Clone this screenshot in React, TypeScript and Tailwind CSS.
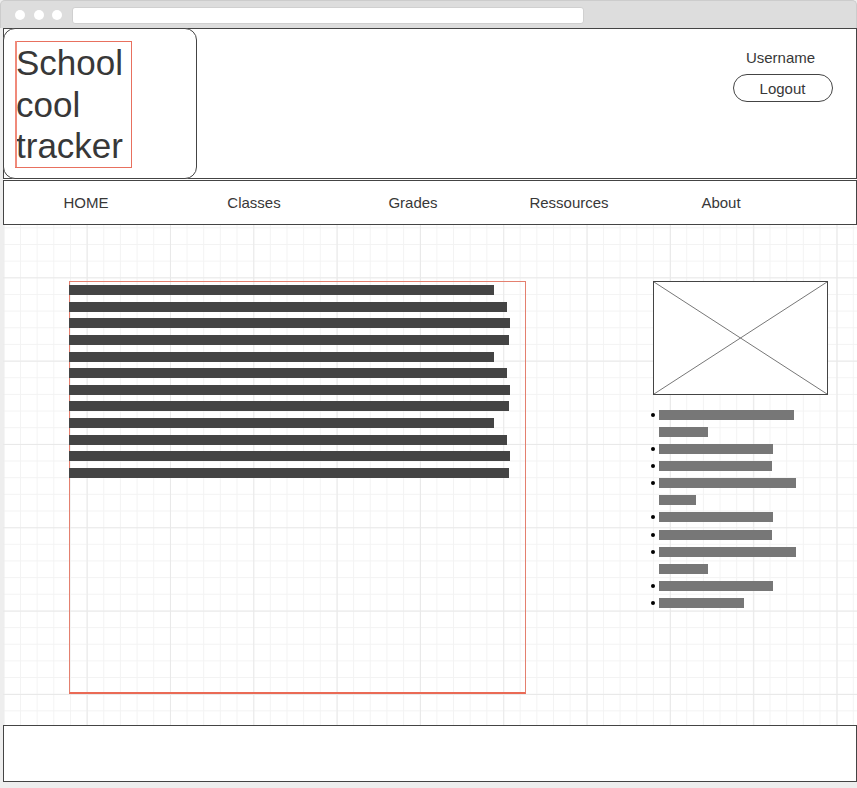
import React from "react";

const navItems = [
  { label: "HOME", w: "w-[164px]" },
  { label: "Classes", w: "w-[172px]" },
  { label: "Grades", w: "w-[146px]" },
  { label: "Ressources", w: "w-[166px]" },
  { label: "About", w: "w-[138px]" },
];

const textBars = [
  "w-[425px]", "w-[438px]", "w-[441px]", "w-[440px]",
  "w-[425px]", "w-[438px]", "w-[441px]", "w-[440px]",
  "w-[425px]", "w-[438px]", "w-[441px]", "w-[440px]",
];

// each row: bullet or continuation line
const listRows = [
  { dot: true, w: "w-[135px]" },
  { dot: false, w: "w-[49px]" },
  { dot: true, w: "w-[114px]" },
  { dot: true, w: "w-[113px]" },
  { dot: true, w: "w-[137px]" },
  { dot: false, w: "w-[37px]" },
  { dot: true, w: "w-[114px]" },
  { dot: true, w: "w-[113px]" },
  { dot: true, w: "w-[137px]" },
  { dot: false, w: "w-[49px]" },
  { dot: true, w: "w-[114px]" },
  { dot: true, w: "w-[85px]" },
];

const App: React.FC = () => {
  return (
    <div className="w-[857px] h-[788px] bg-[#eeeeee] font-['Liberation_Sans',Arial,sans-serif] text-[#383838] overflow-hidden">
      {/* Browser chrome */}
      <div className="h-[28px] bg-[#dddddd] border border-b-0 border-[#cccccc] rounded-t-[5px] flex items-start pl-[14px]">
        <div className="flex gap-[8.5px] mt-[9px]">
          <span className="w-[10px] h-[10px] rounded-full bg-white" />
          <span className="w-[10px] h-[10px] rounded-full bg-white" />
          <span className="w-[10px] h-[10px] rounded-full bg-white" />
        </div>
        <div className="ml-[10px] mt-[6px] w-[512px] h-[17px] rounded-[3px] bg-white border border-[#d0d0d0]" />
      </div>

      <div className="ml-[3px] w-[854px] bg-white">
        {/* Header */}
        <header className="h-[151px] border border-[#444] flex">
          <div className="-ml-px -mt-px w-[194px] h-[151px] rounded-[12px] border border-[#444] bg-white pl-[12px] pt-[13px] shrink-0">
            <div className="relative w-[115px] h-[125px] ring-1 ring-[#e8705e] text-[35px] leading-[41.67px]">
              <span className="absolute -left-px -top-px w-[2px] h-[126px] bg-[#f08a7a]" />
              School
              <br />
              cool
              <br />
              tracker
            </div>
          </div>
          <div className="ml-auto mr-[23px] w-[100px] flex flex-col items-center pt-[20px]">
            <div className="text-[15px] leading-[17px] pr-[5px]">Username</div>
            <button className="mt-[8px] w-[100px] h-[28px] rounded-full border border-[#444] bg-white text-[15px] pt-[3px] pr-px text-[#383838]">
              Logout
            </button>
          </div>
        </header>

        {/* Nav */}
        <nav className="mt-px h-[45px] border border-[#444] flex items-center text-[15px] pt-px">
          {navItems.map((n) => (
            <div key={n.label} className={`${n.w} text-center`}>
              {n.label}
            </div>
          ))}
        </nav>

        {/* Content with grid */}
        <main className="h-[500px] flex items-start bg-white bg-[linear-gradient(to_right,#e9e9e9_1px,transparent_1px),linear-gradient(to_bottom,#e9e9e9_1px,transparent_1px),linear-gradient(to_right,#f3f3f3_1px,transparent_1px),linear-gradient(to_bottom,#f3f3f3_1px,transparent_1px)] bg-[size:83.33px_83.33px,83.33px_83.33px,16.67px_16.67px,16.67px_16.67px] bg-[position:0.33px_52.33px,0.33px_52.33px,0.33px_2.33px,0.33px_2.33px]">
          <div className="ml-[66px] mt-[56px] w-[457px] h-[413px] border border-[#e4806f] border-b-2 border-b-[#ea6a55] shrink-0">
            <div className="-ml-px pt-[3px] flex flex-col gap-[6.64px]">
              {textBars.map((w, i) => (
                <div key={i} className={`${w} h-[10px] bg-[#444]`} />
              ))}
            </div>
          </div>

          <div className="ml-[127px] mt-[56px] w-[175px] shrink-0">
            <div className="relative w-[175px] h-[114px] border border-[#444] bg-white">
              <svg className="absolute inset-0 w-full h-full" viewBox="0 0 100 100" preserveAspectRatio="none">
                <line x1="0" y1="0" x2="100" y2="100" stroke="#777" strokeWidth="1" vectorEffect="non-scaling-stroke" />
                <line x1="100" y1="0" x2="0" y2="100" stroke="#777" strokeWidth="1" vectorEffect="non-scaling-stroke" />
              </svg>
            </div>
            <div className="-ml-[3px] mt-[15px] flex flex-col gap-[7.09px]">
              {listRows.map((r, i) => (
                <div key={i} className="flex items-center h-[10px]">
                  <span className={`ml-px w-[4px] h-[4px] rounded-full ${r.dot ? "bg-black" : "bg-transparent"}`} />
                  <span className={`ml-[4px] h-[10px] bg-[#777] ${r.w}`} />
                </div>
              ))}
            </div>
          </div>
        </main>

        {/* Footer */}
        <footer className="h-[57px] border border-[#444] bg-white" />
      </div>
    </div>
  );
};

export default App;
